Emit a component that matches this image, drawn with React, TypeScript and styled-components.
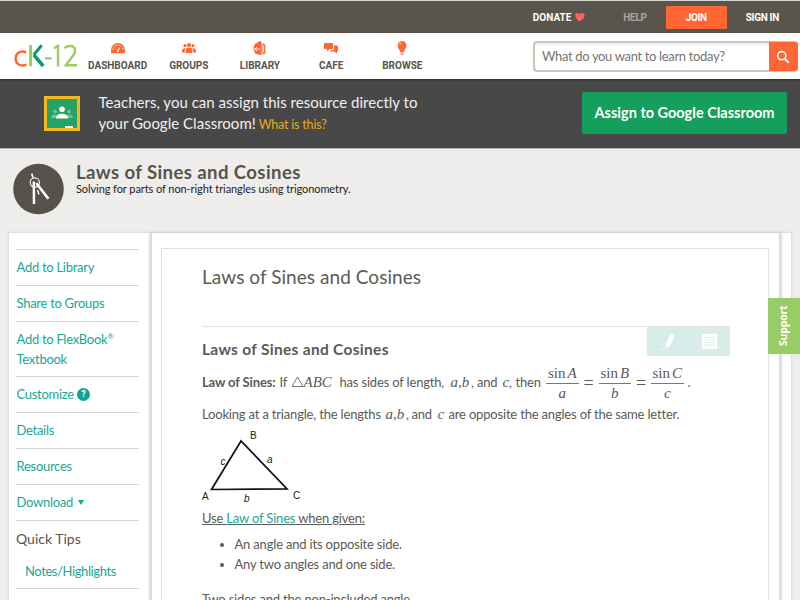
import React from 'react';
import styled, { createGlobalStyle, css } from 'styled-components';

const GlobalStyle = createGlobalStyle`
  * { box-sizing: border-box; }
  body { margin: 0; background: #efedeb; font-family: Lato, sans-serif; color: #56544d; overflow: hidden; }
  h1, h2, h3, p, ul { margin: 0; padding: 0; font-weight: 400; }
  a { color: #1aa695; text-decoration: none; }
  svg { display: block; flex: none; }
`;

const Page = styled.div`
  height: 600px;
  overflow: hidden;
  position: relative;
`;

const TopBar = styled.div`
  height: 33px;
  border-top: 1px solid #d3d6ca;
  background: #5a554c;
  display: flex;
  align-items: center;
  justify-content: flex-end;
  padding-right: 21px;
  color: #fff;
  font: 700 10px Roboto, sans-serif;
  white-space: nowrap;
`;
const Donate = styled.span`
  display: flex;
  align-items: center;
  gap: 4px;
  margin-right: 38px;
`;
const Help = styled.span`
  color: #aaa69e;
  letter-spacing: -0.3px;
  margin-right: 19px;
`;
const Join = styled.span`
  width: 61px;
  height: 23px;
  line-height: 23px;
  background: #ff6633;
  text-align: center;
  letter-spacing: -0.4px;
  margin-right: 19px;
  border-radius: 1px;
`;
const SignIn = styled.span`
  letter-spacing: -0.3px;
`;

const Nav = styled.nav`
  height: 46px;
  background: #fff;
  display: flex;
  align-items: flex-start;
  padding-left: 14px;
  position: relative;
  box-shadow: 0 1px 2px rgba(0, 0, 0, 0.4);
`;
const Logo = styled.div`
  width: 68px;
  padding-top: 9px;
`;
const NavItem = styled.div`
  width: 71.2px;
  padding-top: 7px;
  display: flex;
  flex-direction: column;
  align-items: center;
  gap: 3px;
  font: 700 10px/13px Roboto, sans-serif;
  color: #56544d;
`;
const Search = styled.div`
  width: 265px;
  height: 31px;
  margin: 8px 0 0 95px;
  border: 2px solid #c9c7be;
  border-right: 0;
  border-radius: 4px;
  display: flex;
  align-items: center;
  padding-left: 7px;
  box-shadow: inset 0 2px 2px #eee;
`;
const Placeholder = styled.span`
  flex: 1;
  font-size: 13px;
  line-height: 26px;
  padding-bottom: 2px;
  letter-spacing: -0.34px;
  color: #77756f;
`;
const SearchButton = styled.span`
  width: 29px;
  height: 29px;
  background: #ff6633;
  border-radius: 0 3px 3px 0;
  display: flex;
  align-items: center;
  justify-content: center;
`;

const Banner = styled.section`
  height: 70px;
  background: #484848;
  border-bottom: 1px solid #b5b4b1;
  display: flex;
  align-items: flex-start;
  padding: 13px 13px 0 44px;
`;
const BannerText = styled.div`
  flex: 1;
  padding-left: 18.5px;
  color: #f0f0f0;
  font-size: 15px;
  line-height: 20.5px;
  letter-spacing: 0.02px;
  white-space: nowrap;
`;
const WhatLink = styled.a`
  color: #e5ac17;
  font-size: 12.5px;
  letter-spacing: -0.2px;
  margin-left: -1px;
`;
const Assign = styled.button`
  width: 205px;
  height: 42px;
  padding: 0 0 1px;
  border: 0;
  border-radius: 2px;
  background: #149f5c;
  color: #fff;
  font: 700 14.5px Lato, sans-serif;
`;
const ClassroomIcon = styled.div`
  margin-top: 4px;
`;

const Heading = styled.header`
  height: 83px;
  display: flex;
  padding: 14px 0 0 13px;
`;
const HeadingText = styled.div`
  padding-left: 12px;
  margin-top: -1px;
  color: #222;
  font-size: 11px;
  line-height: 14px;
  letter-spacing: -0.08px;
`;
const PageTitle = styled.h1`
  font: 700 18.6px/20px Lato, sans-serif;
  color: #56544d;
  letter-spacing: 0.39px;
`;

const Columns = styled.div`
  margin: 0 8px;
  height: 400px;
  display: flex;
  background: #fff;
  border: 1px solid #e0dfdc;
  box-shadow: 0 0 2px #ddd;
`;
const Sidebar = styled.aside`
  width: 141px;
  padding: 16px 11px 0 7px;
  font-size: 13px;
  line-height: 19.5px;
`;
const SideItem = styled.div<{ $tall?: boolean }>`
  height: ${(p) => (p.$tall ? 55 : 36)}px;
  border-top: 1px solid #d6d6d6;
  padding: 8px 0 0 0.5px;
  color: #1aa695;
  letter-spacing: -0.28px;
  display: flex;
  align-items: flex-start;
`;
const Reg = styled.sup`
  font-size: 8px;
  line-height: 0;
`;
const HelpDot = styled.span`
  width: 13px;
  height: 13px;
  margin: 3px 0 0 3px;
  border-radius: 50%;
  background: #12a391;
  color: #fff;
  font: 700 9px/13px Roboto, sans-serif;
  text-align: center;
`;
const Caret = styled.span`
  margin: 7px 0 0 5px;
  border: 3px solid transparent;
  border-top: 5px solid #1aa695;
  border-bottom: 0;
`;
const Tips = styled.div`
  height: 69px;
  border-top: 1px solid #d6d6d6;
  border-bottom: 1px solid #d6d6d6;
  padding-top: 8px;
  font-size: 14px;
  color: #56544d;
`;
const TipLink = styled.a`
  display: block;
  font-size: 13px;
  letter-spacing: -0.4px;
  padding: 13px 0 0 9px;
`;

const Main = styled.main`
  width: 631px;
  padding: 15px 10px 0 9px;
  border: 1px solid #dcdbd8;
  border-width: 0 2px 0 2px;
  box-shadow: 0 0 3px #bbb;
`;
const Card = styled.article`
  height: 400px;
  border: 1px solid #e2e2e2;
  padding: 0 39px 0 40px;
  font-size: 13px;
  color: #5c5a55;
  white-space: nowrap;
  position: relative;
`;
const CardTitle = styled.h2`
  height: 78px;
  padding-top: 16px;
  border-bottom: 1px solid #e3e3e3;
  font-size: 19px;
  line-height: 24px;
  letter-spacing: 0.05px;
`;
const Tools = styled.div`
  position: absolute;
  left: 485px;
  top: 78px;
  width: 83px;
  height: 29px;
  background: #d8ecea;
  display: grid;
  grid-template-columns: 1fr 1fr;
  place-items: center;
`;
const SubTitle = styled.h3`
  height: 33px;
  margin-top: 6px;
  font: 700 15.5px/32px Lato, sans-serif;
  letter-spacing: 0.3px;
`;
const Line = styled.p`
  height: 32px;
  display: flex;
  align-items: center;
`;
const Run = styled.span<{ $w: number; $bold?: boolean }>`
  width: ${(p) => p.$w}px;
  flex: none;
  letter-spacing: -0.18px;
  ${(p) => p.$bold && css`font-weight: 700; letter-spacing: -0.13px;`}
`;
const Maths = styled.span<{ $w: number; $upright?: boolean }>`
  width: ${(p) => p.$w}px;
  flex: none;
  font: ${(p) => (p.$upright ? 'normal' : 'italic')} 15px "Liberation Serif", serif;
`;
const Fraction = styled.span`
  width: 32.5px;
  flex: none;
  display: grid;
  font: italic 15px/19px "Liberation Serif", serif;
  text-align: center;
  position: relative;
  top: 1px;
`;
const Over = styled.span`
  border-bottom: 1px solid #777;
`;
const Sin = styled.span`
  font-style: normal;
  margin-right: 2px;
`;
const Equals = styled.span`
  width: 20px;
  flex: none;
  text-align: center;
  padding-top: 3px;
  font: 18px "Liberation Serif", serif;
`;
const Figure = styled.div`
  height: 77px;
  margin-top: -1px;
`;
const Given = styled.p`
  line-height: 24px;
  text-decoration: underline;
  letter-spacing: -0.18px;
`;
const Bullets = styled.ul`
  margin-top: 5px;
  padding-left: 32.5px;
  line-height: 19.5px;
  letter-spacing: -0.18px;
`;
const Closing = styled.p`
  margin-top: 15px;
  line-height: 20px;
  letter-spacing: -0.18px;
`;
const Support = styled.div`
  position: absolute;
  right: 0;
  top: 298px;
  width: 32px;
  height: 56px;
  background: #98cc66;
  color: #fff;
  writing-mode: vertical-rl;
  transform: rotate(180deg);
  text-align: center;
  font: 700 10.5px/30px "Open Sans", sans-serif;
  letter-spacing: -0.2px;
`;

const orange = '#ff6633';
const Dashboard = () => (
  <svg width="16" height="16" viewBox="0 0 16 16">
    <path d="M1 13.3V10A7 7 0 0 1 15 10V13.3Z" fill={orange} />
    <path d="M3 10A5 5 0 0 1 13 10" fill="none" stroke="#fff" strokeWidth="0.9" strokeDasharray="1.5 1.1" />
    <path d="M7.8 11 9.5 7.5" stroke="#fff" strokeWidth="1.1" />
    <circle cx="7.8" cy="11" r="1.1" fill="#fff" />
  </svg>
);
const Groups = () => (
  <svg width="16" height="16" viewBox="0 0 16 16" fill={orange}>
    <circle cx="8" cy="5" r="2.1" /><circle cx="4" cy="5.6" r="1.6" /><circle cx="12" cy="5.6" r="1.6" />
    <path d="M4.7 13V9.6Q5 7.6 8 7.6T11.3 9.6V13ZM1 12.6V10.3Q1.3 8 4.6 7.9Q3.8 8.8 3.8 10V12.6ZM15 12.6V10.3Q14.7 8 11.4 7.9Q12.2 8.8 12.2 10V12.6Z" />
  </svg>
);
const Library = () => (
  <svg width="16" height="16" viewBox="0 0 16 16" fill={orange}>
    <path d="M2 6Q2.5 3 6 2.8L6.4 1.3H9L9.7 3V14.5Q7 15.4 3.3 13.5 1 10 2 6ZM10.5 3.1Q13 3.4 13.4 6V13.2Q12.4 14.3 10.5 14.5Z" />
    <path d="M2 9H8M5 7 3 9 5 11M11.6 5.5V12.5" fill="none" stroke="#fff" strokeWidth="0.9" />
  </svg>
);
const Cafe = () => (
  <svg width="16" height="16" viewBox="0 0 16 16" fill={orange}>
    <path d="M1.8 3H9.3Q10 3 10 4V8.2Q10 9 9 9H6.5L4 11.4V9H2Q1 9 1 8V4Q1 3 1.8 3Z" />
    <path d="M11 5.5H14Q15 5.5 15 6.5V10.5Q15 11.5 14 11.5V13.7L11.5 11.5H8Q7 11.5 7 10.2H9.5Q11 10.2 11 9Z" />
  </svg>
);
const Browse = () => (
  <svg width="16" height="16" viewBox="0 0 16 16">
    <path d="M5.6 10.2Q3.7 7.8 3.7 5.3A4.4 4.4 0 0 1 12.5 5.3Q12.5 7.8 10.5 10.2L10 12H6.1Z" fill={orange} />
    <path d="M6.3 12.5H9.9L9 15H7Z" fill="#ff936e" />
    <path d="M5.6 5Q5.8 3.1 7.6 2.7" fill="none" stroke="#ffc9b5" />
  </svg>
);

const navItems = [
  { label: 'DASHBOARD', Icon: Dashboard },
  { label: 'GROUPS', Icon: Groups },
  { label: 'LIBRARY', Icon: Library },
  { label: 'CAFE', Icon: Cafe },
  { label: 'BROWSE', Icon: Browse },
];
const ratios = [['A', 'a'], ['B', 'b'], ['C', 'c']];

export default function App() {
  return (
    <Page>
      <GlobalStyle />
      <TopBar>
        <Donate>
          DONATE
          <svg width="10" height="10" viewBox="0 0 10 10">
            <path d="M4 9.4Q.2 6 .2 3.2C.3.3 3.5.2 4.5 2.5 6.6-.1 10 1.3 9.6 4 9 7 6 8.5 4 9.4Z" fill="#ff6262" />
          </svg>
        </Donate>
        <Help>HELP</Help>
        <Join>JOIN</Join>
        <SignIn>SIGN IN</SignIn>
      </TopBar>
      <Nav>
        <Logo>
          <svg width="64" height="28" viewBox="0 0 64 28" fill="none" strokeWidth="2.4">
            <path d="M12.3 10.4Q8 8.3 4.3 10.8 1.5 13 1.6 17.2 2 22 6.2 23.2 9.5 23.9 12.4 22.6" stroke="#ff6633" />
            <path d="M16.6 3V24.3" stroke="#9bcc62" strokeWidth="3" />
            <path d="M27.7 3.2 19.8 12.8" stroke="#0c9873" strokeWidth="3" />
            <path d="M19.8 12.8 29.2 24" stroke="#0c9873" strokeWidth="3.6" />
            <path d="M31 16.4H37.6M39.8 6.3 44 4V24.5M50.4 6Q53.5 3.6 57 4C62 4.6 62 9.9 59.3 13.3L51.8 23.2H63" stroke="#9bcc62" />
          </svg>
        </Logo>
        {navItems.map(({ label, Icon }) => (
          <NavItem key={label}><Icon />{label}</NavItem>
        ))}
        <Search>
          <Placeholder>What do you want to learn today?</Placeholder>
          <SearchButton>
            <svg width="14" height="14" viewBox="0 0 14 14" fill="none" stroke="#fff" strokeWidth="1.6">
              <circle cx="5.7" cy="5.7" r="4.1" /><path d="m8.7 8.7 4 4" strokeWidth="2" />
            </svg>
          </SearchButton>
        </Search>
      </Nav>
      <Banner>
        <ClassroomIcon>
          <svg width="36" height="35" viewBox="0 0 36 35">
            <path d="M0 0H36V35H0Z" fill="#f4b91b" /><path d="M3 3H33V32H3Z" fill="#25a366" />
            <g fill="#72bf97"><circle cx="11" cy="15.5" r="1.9" /><circle cx="25" cy="15.5" r="1.9" /><path d="M7 22Q7 18.5 11 18.5T15 22ZM21 22Q21 18.5 25 18.5T29 22Z" /></g>
            <circle cx="18" cy="13.3" r="2.8" fill="#fff" /><path d="M12 22.5Q12 17.8 18 17.8T24 22.5ZM21 30H29V32H21Z" fill="#fff" />
          </svg>
        </ClassroomIcon>
        <BannerText>
          Teachers, you can assign this resource directly to<br />
          your Google Classroom! <WhatLink>What is this?</WhatLink>
        </BannerText>
        <Assign>Assign to Google Classroom</Assign>
      </Banner>
      <Heading>
        <svg width="51" height="52" viewBox="0 0 51 52">
          <circle cx="25.5" cy="26" r="25.3" fill="#56524a" />
          <g stroke="#fff" fill="none">
            <circle cx="21.8" cy="19.5" r="4.6" strokeWidth="1.1" />
            <path d="M18.7 10.5 20 14.5" strokeWidth="1.8" />
            <path d="M20.8 18.5 21 41" strokeWidth="2.4" />
            <path d="M23.2 20 35.4 35.8" strokeWidth="2.6" />
            <path d="M24.5 27 26 31.5" strokeWidth="1.4" />
          </g>
        </svg>
        <HeadingText>
          <PageTitle>Laws of Sines and Cosines</PageTitle>
          Solving for parts of non-right triangles using trigonometry.
        </HeadingText>
      </Heading>
      <Columns>
        <Sidebar>
          <SideItem>Add to Library</SideItem>
          <SideItem>Share to Groups</SideItem>
          <SideItem $tall><span>Add to FlexBook<Reg>®</Reg><br />Textbook</span></SideItem>
          <SideItem>Customize<HelpDot>?</HelpDot></SideItem>
          <SideItem>Details</SideItem>
          <SideItem>Resources</SideItem>
          <SideItem>Download<Caret /></SideItem>
          <Tips>Quick Tips<TipLink>Notes/Highlights</TipLink></Tips>
        </Sidebar>
        <Main>
          <Card>
            <CardTitle>Laws of Sines and Cosines</CardTitle>
            <Tools>
              <svg width="18" height="18" viewBox="0 0 18 18" fill="#fff">
                <path d="M12 1 15.5 2.5 11 13 6.5 15.5 7.2 9.5ZM6 16 1 17 5 15Z" />
              </svg>
              <svg width="15" height="15" viewBox="0 0 15 15">
                <path d="M0 0H15V15H0Z" fill="#fff" />
                <path d="M2 3.5H13M2 6H13M2 8.5H13M2 11H13" stroke="#d8ecea" />
              </svg>
            </Tools>
            <SubTitle>Laws of Sines and Cosines</SubTitle>
            <Line>
              <Run $w={77.5} $bold>Law of Sines:</Run>
              <Run $w={11}>If</Run>
              <svg width="13" height="12" viewBox="0 0 13 12"><path d="M1 10.5H12L6.5 1Z" fill="none" stroke="#666" strokeWidth=".9" /></svg>
              <Maths $w={36}>ABC</Maths>
              <Run $w={111}>has sides of length,</Run>
              <Maths $w={20.5}>a,b</Maths>
              <Run $w={6}>,</Run>
              <Run $w={25.5}>and</Run>
              <Maths $w={6.5}>c</Maths>
              <Run $w={6.5}>,</Run>
              <Run $w={30.5}>then</Run>
              {ratios.map(([angle, side], i) => (
                <React.Fragment key={side}>
                  {i > 0 && <Equals>=</Equals>}
                  <Fraction><Over><Sin>sin</Sin>{angle}</Over><span>{side}</span></Fraction>
                </React.Fragment>
              ))}
              <Maths $w={10} $upright>&nbsp;.</Maths>
            </Line>
            <Line>
              <Run $w={183.5}>Looking at a triangle, the lengths</Run>
              <Maths $w={20.5}>a,b</Maths>
              <Run $w={5.5}>,</Run>
              <Run $w={26}>and</Run>
              <Maths $w={11}>c</Maths>
              <Run $w={232}>are opposite the angles of the same letter.</Run>
            </Line>
            <Figure>
              <svg width="104" height="76" viewBox="0 0 104 76" fontFamily="Liberation Sans, Arial, sans-serif" fontSize="10" fill="#222">
                <path d="M39 12 9.5 60.5 85 59.8Z" fill="none" stroke="#111" strokeWidth="1.7" />
                <text x="48" y="10">B</text><text x="0" y="71">A</text><text x="91" y="69.5">C</text>
                <g fontStyle="italic"><text x="18.5" y="36">c</text><text x="65" y="34">a</text><text x="42" y="72.5">b</text></g>
              </svg>
            </Figure>
            <Given>Use <a>Law of Sines</a> when given:</Given>
            <Bullets>
              <li>An angle and its opposite side.</li>
              <li>Any two angles and one side.</li>
            </Bullets>
            <Closing>Two sides and the non-included angle</Closing>
          </Card>
        </Main>
      </Columns>
      <Support>Support</Support>
    </Page>
  );
}
